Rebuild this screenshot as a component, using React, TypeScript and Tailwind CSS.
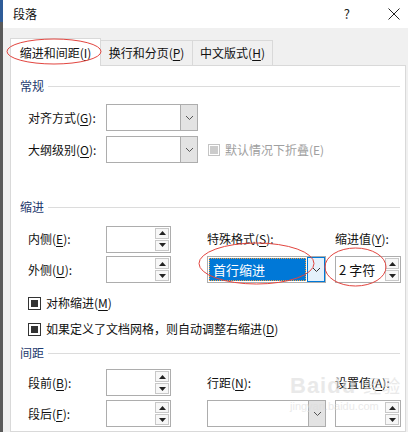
import React from "react";

// 段落 dialog (Word) with red annotation circles

function U({ children }: { children: React.ReactNode }) {
  return <span className="underline underline-offset-2">{children}</span>;
}

function Chevron({ color = "#555" }: { color?: string }) {
  return (
    <svg width="9" height="6" viewBox="0 0 9 6">
      <path d="M1 1 L4.5 4.5 L8 1" fill="none" stroke={color} strokeWidth="1" />
    </svg>
  );
}

function Combo(props: { width: number; children?: React.ReactNode; focused?: boolean }) {
  const { width, children, focused } = props;
  if (focused) {
    return (
      <div className="flex h-[27px] border border-[#adadad] bg-white" style={{ width }}>
        <div className="flex flex-1 items-stretch p-[1px]">
          <div className="flex flex-1 items-center border border-dotted border-[#f0a040] bg-[#0078d7] pl-[3px] text-[13px] text-white">
            {children}
          </div>
        </div>
        <div className="flex w-[18px] items-center justify-center border border-[#0078d7] bg-[#e5f1fb]">
          <Chevron color="#333" />
        </div>
      </div>
    );
  }
  return (
    <div className="flex h-[27px] border border-[#adadad] bg-white" style={{ width }}>
      <div className="flex-1" />
      <div className="flex w-[17px] items-center justify-center border-l border-[#adadad] bg-[#e3e3e3]">
        <Chevron />
      </div>
    </div>
  );
}

function Spin(props: { children?: React.ReactNode; width?: number }) {
  const { children, width = 65 } = props;
  return (
    <div className="flex h-[27px] border border-[#adadad] bg-white" style={{ width }}>
      <div className="flex flex-1 items-center pl-[3px] text-[13px] text-[#111]">{children}</div>
      <div className="flex w-[16px] flex-col gap-[1px] p-[1px]">
        <div className="flex flex-1 items-center justify-center border border-[#c8c8c8] bg-[#f7f7f7]">
          <svg width="7" height="4" viewBox="0 0 7 4">
            <path d="M0 4 L3.5 0 L7 4 Z" fill="#222" />
          </svg>
        </div>
        <div className="flex flex-1 items-center justify-center border border-[#c8c8c8] bg-[#f7f7f7]">
          <svg width="7" height="4" viewBox="0 0 7 4">
            <path d="M0 0 L3.5 4 L7 0 Z" fill="#222" />
          </svg>
        </div>
      </div>
    </div>
  );
}

function Check({ disabled, label }: { disabled?: boolean; label: React.ReactNode }) {
  return (
    <div className="flex items-center gap-[5px]">
      <div
        className={
          disabled
            ? "flex h-[12px] w-[12px] items-center justify-center border border-[#c4c4c4] bg-white"
            : "flex h-[13px] w-[13px] items-center justify-center border border-[#333] bg-white"
        }
      >
        <div className={disabled ? "h-[8px] w-[8px] bg-[#cccccc]" : "h-[7px] w-[7px] bg-[#333]"} />
      </div>
      <span className={disabled ? "text-[#a0a0a0]" : "text-[#111]"}>{label}</span>
    </div>
  );
}

function SectionHead({ title }: { title: string }) {
  return (
    <div className="flex h-[16px] items-center pl-[9px] pr-[5px]">
      <span className="text-[#1e3a6e]">{title}</span>
      <div className="ml-[4px] h-px flex-1 bg-[#dcdcdc]" />
    </div>
  );
}

function Ellipse(props: { x: number; y: number; w: number; h: number }) {
  const { x, y, w, h } = props;
  return (
    <svg className="pointer-events-none absolute z-20" style={{ left: x, top: y }} width={w} height={h}>
      <ellipse cx={w / 2} cy={h / 2} rx={w / 2 - 1} ry={h / 2 - 1} fill="none" stroke="#e2453f" strokeWidth="1" />
    </svg>
  );
}

export default function App() {
  return (
    <div className="relative flex h-[432px] w-[408px] overflow-hidden font-['Noto_Sans_CJK_SC',sans-serif] text-[12px] text-[#111]">
      {/* 背景文档的边缘 */}
      <div className="flex w-[3px] flex-col bg-[#5a5a5a]">
        <div className="h-[22px] bg-[#2f5c98]" />
      </div>

      <div className="flex flex-1 flex-col bg-[#f0f0f0]">
        {/* 标题栏 */}
        <div className="flex h-[28px] items-center bg-white pl-[10px]">
          <span className="text-[12px]">段落</span>
          <div className="flex-1" />
          <span className="mr-[38px] text-[13px] text-[#222]">?</span>
          <svg width="12" height="12" viewBox="0 0 12 12" className="mr-[8px]">
            <path d="M0.5 0.5 L11.5 11.5 M11.5 0.5 L0.5 11.5" stroke="#222" strokeWidth="1" />
          </svg>
        </div>

        {/* 标签页 */}
        <div className="mt-[10px] flex h-[27px] items-end pl-[7px]">
          <div className="relative z-10 -mb-px flex h-[28px] w-[91px] items-center justify-center border border-b-0 border-[#d9d9d9] bg-white">
            缩进和间距(<U>I</U>)
          </div>
          <div className="flex h-[25px] w-[92px] items-center justify-center border border-l-0 border-b-0 border-[#d9d9d9] bg-[#f0f0f0]">
            换行和分页(<U>P</U>)
          </div>
          <div className="flex h-[25px] w-[80px] items-center justify-center border border-l-0 border-b-0 border-[#d9d9d9] bg-[#f0f0f0]">
            中文版式(<U>H</U>)
          </div>
        </div>

        <div className="ml-[7px] mr-[2px] flex-1 border border-[#d9d9d9] bg-white">
          <div className="mt-[12px]">
            <SectionHead title="常规" />
          </div>

          <div className="mt-[10px] flex h-[27px] items-center pl-[17px]">
            <span className="w-[78px]">
              对齐方式(<U>G</U>):
            </span>
            <Combo width={92} />
          </div>
          <div className="mt-[5px] flex h-[27px] items-center pl-[17px]">
            <span className="w-[78px]">
              大纲级别(<U>O</U>):
            </span>
            <Combo width={92} />
            <div className="ml-[10px]">
              <Check disabled label="默认情况下折叠(E)" />
            </div>
          </div>

          <div className="mt-[36px]">
            <SectionHead title="缩进" />
          </div>

          <div className="mt-[11px] flex h-[26px] items-center pl-[17px]">
            <div className="flex w-[179px] items-center">
              <span className="w-[78px]">
                内侧(<U>E</U>):
              </span>
              <Spin />
            </div>
            <span className="w-[128px]">
              特殊格式(<U>S</U>):
            </span>
            <span>
              缩进值(<U>Y</U>):
            </span>
          </div>
          <div className="mt-[4px] flex h-[27px] items-center pl-[17px]">
            <div className="flex w-[179px] items-center">
              <span className="w-[78px]">
                外侧(<U>U</U>):
              </span>
              <Spin />
            </div>
            <div className="w-[128px]">
              <Combo width={119} focused>
                首行缩进
              </Combo>
            </div>
            <Spin width={66}>2 字符</Spin>
          </div>

          <div className="mt-[12px] flex h-[16px] items-center pl-[17px]">
            <Check label={<>对称缩进(<U>M</U>)</>} />
          </div>
          <div className="mt-[10px] flex h-[16px] items-center pl-[17px]">
            <Check label={<>如果定义了文档网格，则自动调整右缩进(<U>D</U>)</>} />
          </div>

          <div className="mt-[8px]">
            <SectionHead title="间距" />
          </div>

          <div className="mt-[8px] flex h-[27px] items-center pl-[17px]">
            <div className="flex w-[179px] items-center">
              <span className="w-[78px]">
                段前(<U>B</U>):
              </span>
              <Spin />
            </div>
            <span className="w-[128px]">
              行距(<U>N</U>):
            </span>
            <span>
              设置值(<U>A</U>):
            </span>
          </div>
          <div className="mt-[4px] flex h-[27px] items-center pl-[17px]">
            <div className="flex w-[179px] items-center">
              <span className="w-[78px]">
                段后(<U>F</U>):
              </span>
              <Spin />
            </div>
            <div className="w-[128px]">
              <Combo width={119} />
            </div>
            <Spin width={66} />
          </div>
        </div>
      </div>

      {/* 水印 */}
      <div className="pointer-events-none absolute left-[290px] top-[372px] flex flex-col items-start text-[#dcdcdc] opacity-60">
        <span className="font-['Liberation_Sans',sans-serif] text-[22px] font-bold leading-[26px] tracking-[1px]">
          Baidu <span className="font-['Noto_Sans_CJK_SC',sans-serif] text-[18px] font-normal">经验</span>
        </span>
        <span className="font-['Liberation_Sans',sans-serif] text-[11px] leading-[14px]">jingyan.baidu.com</span>
      </div>

      {/* 红色标注 */}
      <Ellipse x={6} y={38} w={96} h={27} />
      <Ellipse x={198} y={242} w={117} h={43} />
      <Ellipse x={324} y={247} w={63} h={40} />
    </div>
  );
}
